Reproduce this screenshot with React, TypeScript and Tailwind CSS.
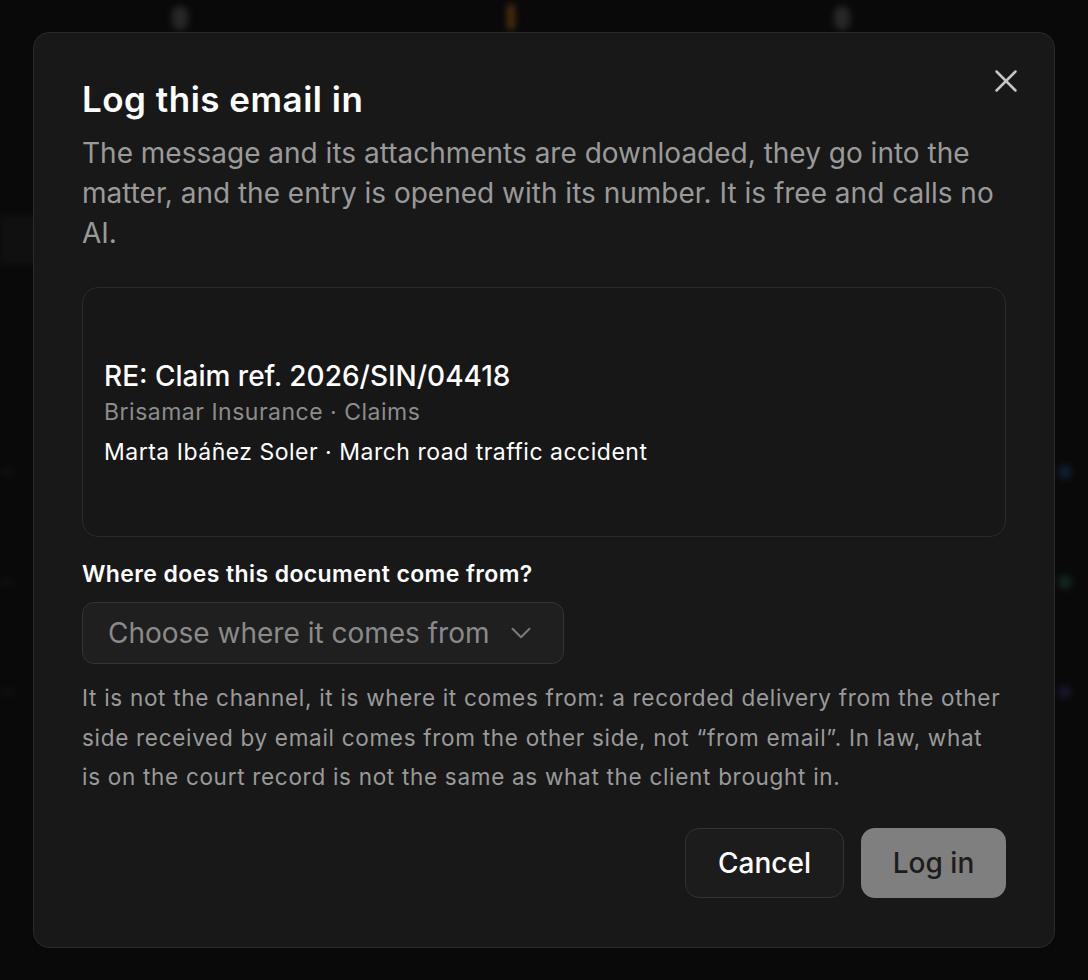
import { X, ChevronDown } from 'lucide-react';

function BackdropApp() {
  return (
    <div className="flex h-full w-full flex-col blur-[3px] opacity-70">
      <div className="flex h-[40px] gap-[319px] pl-[172px]">
        <span className="mt-[6px] h-[24px] w-[16px] rounded-full bg-[#4a4a4a]" />
        <span className="mt-[4px] h-[26px] w-[8px] rounded-full bg-[#8a5a10]" />
        <span className="mt-[6px] h-[24px] w-[16px] rounded-full bg-[#4a4a4a]" />
      </div>
      <div className="mt-[175px] h-[50px] w-[60px] bg-[#1c1c1c]" />
      <div className="mt-[200px] flex flex-col gap-[96px]">
        {['bg-[#1f3a5a]', 'bg-[#1d4a3a]', 'bg-[#2e2450]'].map((c) => (
          <div key={c} className="flex items-center justify-between">
            <span className="h-[2px] w-[14px] bg-[#3a3a3a]" />
            <span className={`mr-[16px] h-[14px] w-[14px] rounded-full ${c}`} />
          </div>
        ))}
      </div>
    </div>
  );
}

export default function App() {
  return (
    <div className="relative h-[980px] w-[1088px] overflow-hidden bg-[#0e0e0e] font-['Inter','Noto_Sans',sans-serif] antialiased">
      <BackdropApp />
      <div className="absolute inset-0 bg-black/30" />

      <div className="absolute left-[33px] top-[32px] w-[1022px] rounded-[16px] border border-[#2a2a2a] bg-[#181818] px-[48px] pb-[49px] pt-[46px]">
        <button className="absolute right-[29px] top-[29px] flex h-[38px] w-[38px] items-center justify-center text-[#c6c6c6]">
          <X size={38} strokeWidth={1.6} />
        </button>

        <h2 className="text-[35px] font-semibold leading-[40px] tracking-[0.5px] text-white">Log this email in</h2>
        <p className="mt-[14px] text-[28px] leading-[40px] text-[#9a9a9a]">
          The message and its attachments are downloaded, they go into the matter, and the entry is opened with its number. It is free and calls no AI.
        </p>

        <div className="mt-[34px] flex h-[250px] flex-col justify-center rounded-[16px] border border-[#2b2b2b] bg-[#171717] px-[21px] pt-[4px]">
          <div className="text-[28px] font-medium leading-[34px] text-white">RE: Claim ref. 2026/SIN/04418</div>
          <div className="mt-[2px] text-[23px] leading-[34px] tracking-[0.5px] text-[#8c8c8c]">Brisamar Insurance · Claims</div>
          <div className="mt-[6px] text-[23px] leading-[34px] tracking-[0.5px] text-white">Marta Ibáñez Soler · March road traffic accident</div>
        </div>

        <label className="mt-[23px] block text-[23px] font-semibold leading-[28px] tracking-[0.4px] text-white">Where does this document come from?</label>
        <button className="mt-[14px] flex h-[62px] w-[482px] items-center gap-[14px] rounded-[12px] border border-[#343434] bg-[#1f1f1f] pl-[25px] text-left">
          <span className="text-[28px] leading-[32px] text-[#8a8a8a]">Choose where it comes from</span>
          <ChevronDown size={34} strokeWidth={1.4} className="text-[#7a7a7a]" />
        </button>

        <p className="mt-[14px] text-[22.5px] leading-[39.5px] tracking-[0.7px] text-[#9a9a9a]">
          It is not the channel, it is where it comes from: a recorded delivery from the other side received by email comes from the other side, not “from email”. In law, what is on the court record is not the same as what the client brought in.
        </p>

        <div className="mt-[31.5px] flex justify-end gap-[17px]">
          <button className="h-[70px] w-[159px] rounded-[14px] border border-[#333333] bg-[#1c1c1c] text-[28px] font-medium text-white">Cancel</button>
          <button className="h-[70px] w-[145px] rounded-[14px] bg-[#7f7f7f] text-[28px] font-medium text-[#1c1c1c]">Log in</button>
        </div>
      </div>
    </div>
  );
}
